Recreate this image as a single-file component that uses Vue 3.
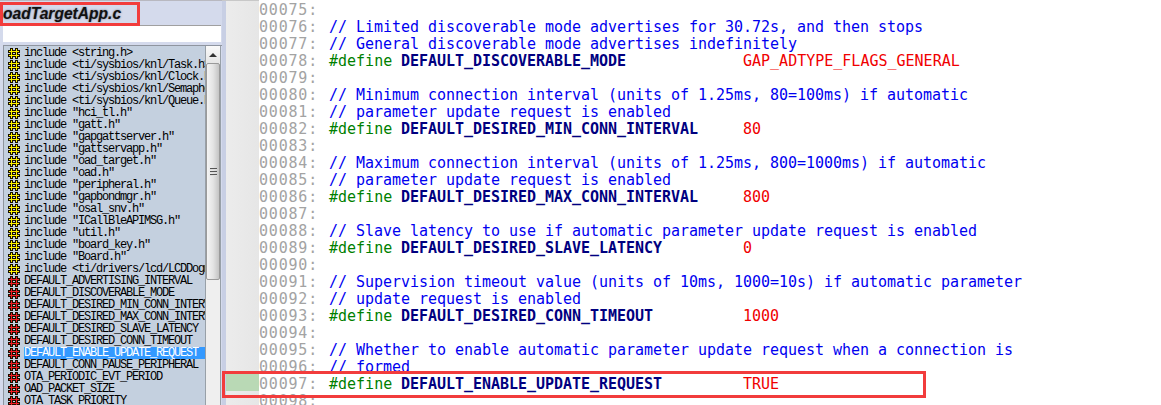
<script setup>
const symbols = [
  ['inc', 'include <string.h>'],
  ['inc', 'include <ti/sysbios/knl/Task.h>'],
  ['inc', 'include <ti/sysbios/knl/Clock.h>'],
  ['inc', 'include <ti/sysbios/knl/Semaphore.h>'],
  ['inc', 'include <ti/sysbios/knl/Queue.h>'],
  ['inc', 'include "hci_tl.h"'],
  ['inc', 'include "gatt.h"'],
  ['inc', 'include "gapgattserver.h"'],
  ['inc', 'include "gattservapp.h"'],
  ['inc', 'include "oad_target.h"'],
  ['inc', 'include "oad.h"'],
  ['inc', 'include "peripheral.h"'],
  ['inc', 'include "gapbondmgr.h"'],
  ['inc', 'include "osal_snv.h"'],
  ['inc', 'include "ICallBleAPIMSG.h"'],
  ['inc', 'include "util.h"'],
  ['inc', 'include "board_key.h"'],
  ['inc', 'include "Board.h"'],
  ['inc', 'include <ti/drivers/lcd/LCDDogm1286.h>'],
  ['def', 'DEFAULT_ADVERTISING_INTERVAL'],
  ['def', 'DEFAULT_DISCOVERABLE_MODE'],
  ['def', 'DEFAULT_DESIRED_MIN_CONN_INTERVAL'],
  ['def', 'DEFAULT_DESIRED_MAX_CONN_INTERVAL'],
  ['def', 'DEFAULT_DESIRED_SLAVE_LATENCY'],
  ['def', 'DEFAULT_DESIRED_CONN_TIMEOUT'],
  ['sel', 'DEFAULT_ENABLE_UPDATE_REQUEST'],
  ['def', 'DEFAULT_CONN_PAUSE_PERIPHERAL'],
  ['def', 'OTA_PERIODIC_EVT_PERIOD'],
  ['def', 'OAD_PACKET_SIZE'],
  ['def', 'OTA_TASK_PRIORITY'],
]

const c = (text) => ({ text })
const d = (name, value) => ({ name, value })

const lines = [
  {},
  c('// Limited discoverable mode advertises for 30.72s, and then stops'),
  c('// General discoverable mode advertises indefinitely'),
  d('DEFAULT_DISCOVERABLE_MODE', 'GAP_ADTYPE_FLAGS_GENERAL'),
  {},
  c('// Minimum connection interval (units of 1.25ms, 80=100ms) if automatic'),
  c('// parameter update request is enabled'),
  d('DEFAULT_DESIRED_MIN_CONN_INTERVAL', '80'),
  {},
  c('// Maximum connection interval (units of 1.25ms, 800=1000ms) if automatic'),
  c('// parameter update request is enabled'),
  d('DEFAULT_DESIRED_MAX_CONN_INTERVAL', '800'),
  {},
  c('// Slave latency to use if automatic parameter update request is enabled'),
  d('DEFAULT_DESIRED_SLAVE_LATENCY', '0'),
  {},
  c('// Supervision timeout value (units of 10ms, 1000=10s) if automatic parameter'),
  c('// update request is enabled'),
  d('DEFAULT_DESIRED_CONN_TIMEOUT', '1000'),
  {},
  c('// Whether to enable automatic parameter update request when a connection is'),
  c('// formed'),
  { ...d('DEFAULT_ENABLE_UPDATE_REQUEST', 'TRUE'), mark: true },
  {},
].map((l, i) => ({ ...l, no: String(75 + i).padStart(5, '0') + ':' }))
</script>

<template>
  <div class="app">
    <aside class="side">
      <div class="title">oadTargetApp.c</div>
      <div class="search"></div>
      <div class="listwrap">
        <ul class="list">
          <li v-for="s in symbols" :key="s[1]" class="item">
            <svg class="hash" width="12" height="11" viewBox="0 0 12 11" shape-rendering="crispEdges">
              <path d="M3.5 0v11M8.5 0v11M0 3.5h12M0 7.5h12" stroke="#1a1000" stroke-width="3" fill="none" />
              <path d="M3.5 1v9M8.5 1v9M1 3.5h10M1 7.5h10" :stroke="s[0] === 'inc' ? '#fff200' : '#ee1c24'" stroke-width="1" fill="none" />
            </svg>
            <span class="label" :class="{ selected: s[0] === 'sel' }">{{ s[1] }}</span>
          </li>
        </ul>
        <div class="scroll">
          <div class="arrow"><i></i></div>
          <div class="thumb"><b></b><b></b><b></b></div>
        </div>
      </div>
    </aside>
    <div class="sep"></div>
    <main class="code">
      <div v-for="l in lines" :key="l.no" class="line">
        <div class="gutter" :class="{ mark: l.mark }"></div>
        <span class="no">{{ l.no }}</span>
        <span v-if="l.text" class="comment">{{ l.text }}</span>
        <template v-else-if="l.name">
          <span class="kw">#define</span><span class="name">{{ l.name }}</span><span class="val">{{ l.value }}</span>
        </template>
      </div>
    </main>
    <div class="box box-title"></div>
    <div class="box box-line"></div>
  </div>
</template>

<style scoped>
.app {
  position: relative;
  display: flex;
  width: 1161px;
  height: 405px;
  overflow: hidden;
  background: #fff;
}
.side {
  width: 222px;
  flex: none;
  background: #d4daec;
  border-top: 1px solid #b8b8c0;
  box-sizing: border-box;
  overflow: hidden;
}
.title {
  height: 24px;
  padding: 3px 0 0 3px;
  box-sizing: border-box;
  font: italic bold 15.6px/19px "Liberation Sans", sans-serif;
  color: #111;
  text-shadow: 0 0 2px #667;
  background: #d4daec;
}
.search {
  height: 17px;
  margin: 0 1px 0 3px;
  background: #fff;
  border-top: 1px solid #a0a0a0;
  box-sizing: border-box;
}
.listwrap {
  display: flex;
  margin: 3px 0 0 3px;
  height: 370px;
  border-left: 1px solid #8f959f;
  border-top: 1px solid #8f959f;
}
.list {
  width: 201px;
  flex: none;
  margin: 0;
  padding: 1px 0 0;
  box-sizing: border-box;
  list-style: none;
  background: #c4d0df;
  overflow: hidden;
}
.item {
  display: flex;
  align-items: center;
  height: 12px;
  white-space: nowrap;
  overflow: hidden;
}
.hash {
  flex: none;
  margin: 0 4px 0 4px;
}
.label {
  flex: 1;
  font: 12px/12px "Liberation Mono", monospace;
  letter-spacing: -1.2px;
  color: #000;
  overflow: hidden;
}
.label.selected {
  background: #3399ff;
  color: #fff;
}
.scroll {
  width: 16px;
  flex: none;
  background: #efefef;
  border-left: 1px solid #98a0a8;
  border-right: 1px solid #98a0a8;
  box-sizing: border-box;
}
.arrow {
  height: 17px;
  display: flex;
  align-items: center;
  justify-content: center;
  background: linear-gradient(#fafafa, #e6e6e6);
}
.arrow i {
  width: 0;
  height: 0;
  border: 4px solid transparent;
  border-bottom: 4px solid #333;
  border-top: 0;
}
.thumb {
  height: 217px;
  display: flex;
  flex-direction: column;
  justify-content: center;
  align-items: center;
  gap: 2px;
  background: linear-gradient(90deg, #f4f4f4, #e4e4e4 50%, #c4c4c4);
  border: 1px solid #9a9a9a;
  border-radius: 2px;
  box-sizing: border-box;
}
.thumb b {
  width: 7px;
  height: 1px;
  background: #555;
  box-shadow: 0 1px 0 #ddd;
}
.sep {
  width: 37px;
  flex: none;
  background: linear-gradient(90deg, #c8cfe4 0 4px, #ececec 4px, #e6e6e6);
  border-top: 1px solid #c8c8c8;
  box-sizing: border-box;
}
.code {
  flex: 1;
  position: relative;
  margin-left: -33px;
  font: 15px/21px "DejaVu Sans Mono", monospace;
  white-space: pre;
}
.line {
  display: flex;
  align-items: flex-start;
  height: 17px;
}
.gutter {
  width: 33px;
  height: 17px;
  flex: none;
}
.gutter.mark {
  background: #b9d9b5;
}
.no {
  width: 70px;
  flex: none;
  color: #a3a3a3;
  letter-spacing: 0.8px;
}
.comment {
  color: #0000f0;
  letter-spacing: -0.03px;
}
.kw {
  width: 72px;
  flex: none;
  color: #008000;
}
.name {
  width: 342px;
  flex: none;
  color: #000080;
  font-weight: bold;
  letter-spacing: -0.03px;
}
.val {
  color: #f00000;
}
.box {
  position: absolute;
  border: 3px solid #f23c3c;
  box-sizing: border-box;
  pointer-events: none;
}
.box-title {
  left: 0;
  top: 2px;
  width: 140px;
  height: 24px;
}
.box-line {
  left: 222px;
  top: 371px;
  width: 704px;
  height: 27px;
}
</style>
